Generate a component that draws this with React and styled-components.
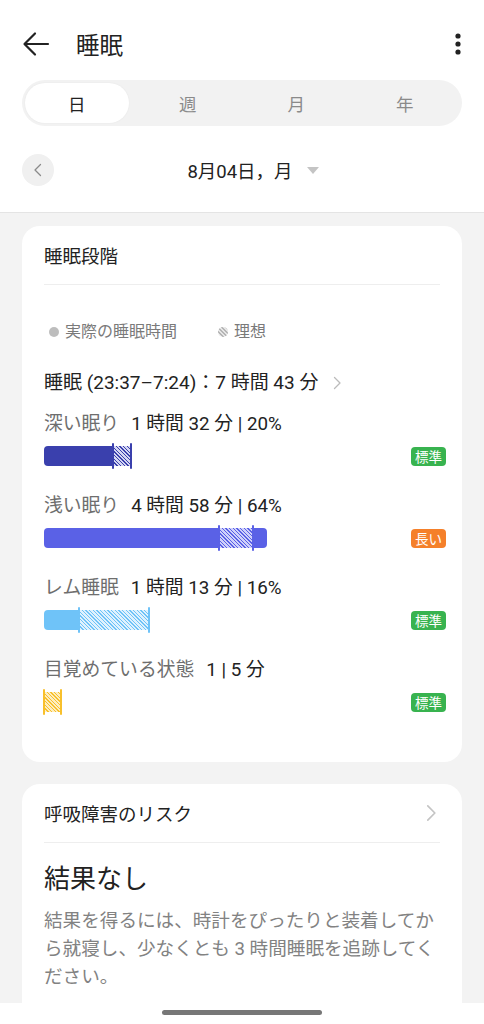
import React from "react";
import styled, { createGlobalStyle } from "styled-components";

const GlobalStyle = createGlobalStyle`
  html, body { margin: 0; padding: 0; }
  body {
    font-family: Roboto, "Noto Sans CJK JP", sans-serif;
    background: #f3f3f3;
    color: #222;
  }
`;

const Screen = styled.div`
  width: 484px;
  height: 1024px;
  display: flex;
  flex-direction: column;
  overflow: hidden;
  background: #f3f3f3;
`;

const Top = styled.div`
  background: #fff;
  border-bottom: 1px solid #e4e4e4;
  padding: 20px 22px 26px;
`;

const AppBar = styled.div`
  height: 48px;
  display: flex;
  align-items: center;
`;

const Title = styled.h1`
  margin: 0 0 0 26px;
  flex: 1;
  font-size: 23.5px;
  font-weight: 400;
  color: #222;
`;

const IconButton = styled.button`
  border: 0;
  background: none;
  padding: 0;
  display: flex;
  align-items: center;
  justify-content: center;
`;

const Tabs = styled.div`
  margin-top: 12px;
  height: 46px;
  box-sizing: border-box;
  padding: 3px;
  border-radius: 23px;
  background: #f2f2f2;
  display: grid;
  grid-template-columns: repeat(4, 1fr);
`;

const Tab = styled.div`
  display: flex;
  align-items: center;
  justify-content: center;
  border-radius: 20px;
  font-size: 17.5px;
  margin-right: ${({ active }) => (active ? "5px" : "0")};
  background: ${({ active }) => (active ? "#fff" : "transparent")};
  color: ${({ active }) => (active ? "#222" : "#8a8a8a")};
  box-shadow: ${({ active }) => (active ? "0 0 2px rgba(0,0,0,0.06)" : "none")};
`;

const DateRow = styled.div`
  margin-top: 28px;
  height: 32px;
  display: grid;
  grid-template-columns: 32px 1fr 32px;
  align-items: center;
`;

const RoundButton = styled.div`
  width: 32px;
  height: 32px;
  border-radius: 50%;
  background: #f0f0f0;
  display: flex;
  align-items: center;
  justify-content: center;
`;

const DateLabel = styled.div`
  display: flex;
  align-items: center;
  justify-content: center;
  gap: 14px;
  font-size: 18.5px;
  color: #222;
  margin-left: 22px;
`;

const Caret = styled.span`
  width: 0;
  height: 0;
  border-left: 6px solid transparent;
  border-right: 6px solid transparent;
  border-top: 7px solid #c4c4c4;
  margin-top: 1px;
`;

const Body = styled.div`
  flex: 1;
  overflow: hidden;
  padding: 13px 22px 0;
  display: flex;
  flex-direction: column;
  gap: 22px;
`;

const Card = styled.section`
  background: #fff;
  border-radius: 18px;
  padding: 0 22px ${({ bottom }) => bottom || 0}px;
`;

const CardHeader = styled.div`
  height: 58px;
  display: flex;
  align-items: center;
  justify-content: space-between;
  border-bottom: 1px solid #eeeeee;
  font-size: 18.5px;
  color: #222;
`;

const Legend = styled.div`
  margin-top: 36px;
  line-height: 22px;
  display: flex;
  align-items: center;
  font-size: 16px;
  color: #7a7a7a;
`;

const LegendItem = styled.span`
  display: flex;
  align-items: center;
  gap: 6px;
  margin-left: ${({ shift }) => shift || 0}px;
`;

const Dot = styled.span`
  width: 10px;
  height: 10px;
  border-radius: 50%;
  background: ${({ hatched }) =>
    hatched
      ? "repeating-linear-gradient(45deg, #b5b5b5 0 1.5px, #e6e6e6 1.5px 3px)"
      : "#bdbdbd"};
`;

const Total = styled.div`
  margin-top: 28px;
  line-height: 24px;
  display: flex;
  align-items: center;
  gap: 12px;
  font-size: 19px;
  color: #222;
`;

const Stages = styled.div`
  margin-top: 17px;
  display: flex;
  flex-direction: column;
  gap: 24px;
`;

const StageLabel = styled.div`
  line-height: 24px;
  font-size: 18.8px;
  color: #222;
  span {
    color: #6e6e6e;
    margin-right: 12px;
  }
`;

const BarRow = styled.div`
  margin-top: 6px;
  height: 28px;
  display: flex;
  align-items: center;
  justify-content: space-between;
  margin-right: -6px;
`;

const Track = styled.div`
  display: flex;
  height: 20px;
`;

const Solid = styled.div`
  height: 100%;
  background: ${({ color }) => color};
  border-radius: ${({ first, last }) =>
    `${first ? 4 : 0}px ${last ? 4 : 0}px ${last ? 4 : 0}px ${first ? 4 : 0}px`};
`;

const Hatch = styled.div`
  position: relative;
  height: 100%;
  background: repeating-linear-gradient(
    45deg,
    ${({ color }) => color} 0 1px,
    ${({ light }) => light} 1px 2.6px
  );
  &::before,
  &::after {
    content: "";
    position: absolute;
    top: -3px;
    bottom: -3px;
    width: 2px;
    border-radius: 1px;
    background: ${({ color }) => color};
  }
  &::before { left: -1px; }
  &::after { right: -1px; }
`;

const Badge = styled.span`
  height: 19px;
  padding: 0 4px;
  border-radius: 4px;
  display: flex;
  align-items: center;
  font-size: 13.5px;
  color: #fff;
  background: ${({ tone }) => (tone === "long" ? "#f5802a" : "#38b34f")};
`;

const RiskTitle = styled.div`
  margin-top: 18px;
  font-size: 26px;
  line-height: 36px;
  color: #222;
`;

const RiskText = styled.p`
  margin: 10px 0 0;
  font-size: 18.6px;
  line-height: 28px;
  color: #828282;
`;

const NavBar = styled.div`
  height: 21px;
  background: #fff;
  display: flex;
  justify-content: center;
  padding-top: 7px;
  box-sizing: border-box;
`;

const Handle = styled.div`
  width: 160px;
  height: 5px;
  border-radius: 3px;
  background: #777;
`;

const Chevron = ({ dir = "right", color = "#bbb", size = 14 }) => (
  <svg width={size} height={size} viewBox="0 0 14 14" fill="none">
    <path
      d={dir === "right" ? "M4.5 1.5 L10 7 L4.5 12.5" : "M9.5 1.5 L4 7 L9.5 12.5"}
      stroke={color}
      strokeWidth="1.3"
      strokeLinecap="round"
      strokeLinejoin="round"
    />
  </svg>
);

const stages = [
  {
    name: "深い眠り",
    value: "1 時間 32 分 | 20%",
    color: "#3a40ad",
    light: "#d4d6f2",
    parts: [
      { type: "solid", w: 69 },
      { type: "hatch", w: 18 },
    ],
    badge: "標準",
  },
  {
    name: "浅い眠り",
    value: "4 時間 58 分 | 64%",
    color: "#5a61e6",
    light: "#cfd1fa",
    parts: [
      { type: "solid", w: 175 },
      { type: "hatch", w: 34 },
      { type: "solid", w: 14 },
    ],
    badge: "長い",
    tone: "long",
  },
  {
    name: "レム睡眠",
    value: "1 時間 13 分 | 16%",
    color: "#6fc3f8",
    light: "#dff2fe",
    parts: [
      { type: "solid", w: 35 },
      { type: "hatch", w: 70 },
    ],
    badge: "標準",
  },
  {
    name: "目覚めている状態",
    value: "1 | 5 分",
    color: "#f8c02c",
    light: "#fdedbf",
    parts: [{ type: "hatch", w: 17 }],
    badge: "標準",
  },
];

function Stage({ stage }) {
  const n = stage.parts.length;
  return (
    <div>
      <StageLabel>
        <span>{stage.name}</span>
        {stage.value}
      </StageLabel>
      <BarRow>
        <Track>
          {stage.parts.map((p, i) =>
            p.type === "solid" ? (
              <Solid
                key={i}
                color={stage.color}
                first={i === 0}
                last={i === n - 1}
                style={{ width: p.w }}
              />
            ) : (
              <Hatch key={i} color={stage.color} light={stage.light} style={{ width: p.w }} />
            )
          )}
        </Track>
        <Badge tone={stage.tone}>{stage.badge}</Badge>
      </BarRow>
    </div>
  );
}

export default function App() {
  return (
    <>
      <GlobalStyle />
      <Screen>
        <Top>
          <AppBar>
            <IconButton aria-label="back">
              <svg width="28" height="28" viewBox="0 0 28 28" fill="none">
                <path
                  d="M26 14 H3 M13 3.5 L2.5 14 L13 24.5"
                  stroke="#222"
                  strokeWidth="2.2"
                  strokeLinecap="round"
                  strokeLinejoin="round"
                />
              </svg>
            </IconButton>
            <Title>睡眠</Title>
            <IconButton aria-label="menu">
              <svg width="8" height="24" viewBox="0 0 8 24">
                <circle cx="4" cy="4" r="2.6" fill="#222" />
                <circle cx="4" cy="12" r="2.6" fill="#222" />
                <circle cx="4" cy="20" r="2.6" fill="#222" />
              </svg>
            </IconButton>
          </AppBar>
          <Tabs>
            <Tab active>日</Tab>
            <Tab>週</Tab>
            <Tab>月</Tab>
            <Tab>年</Tab>
          </Tabs>
          <DateRow>
            <RoundButton>
              <Chevron dir="left" color="#8a8a8a" size={14} />
            </RoundButton>
            <DateLabel>
              8月04日，月
              <Caret />
            </DateLabel>
          </DateRow>
        </Top>
        <Body>
          <Card bottom={46}>
            <CardHeader>睡眠段階</CardHeader>
            <Legend>
              <LegendItem shift={5}>
                <Dot />
                実際の睡眠時間
              </LegendItem>
              <LegendItem shift={41}>
                <Dot hatched />
                理想
              </LegendItem>
            </Legend>
            <Total>
              睡眠 (23:37–7:24)：7 時間 43 分
              <Chevron />
            </Total>
            <Stages>
              {stages.map((s) => (
                <Stage key={s.name} stage={s} />
              ))}
            </Stages>
          </Card>
          <Card bottom={30}>
            <CardHeader>
              呼吸障害のリスク
              <Chevron size={18} color="#c4c4c4" />
            </CardHeader>
            <RiskTitle>結果なし</RiskTitle>
            <RiskText>
              結果を得るには、時計をぴったりと装着してから就寝し、少なくとも 3 時間睡眠を追跡してください。
            </RiskText>
          </Card>
        </Body>
        <NavBar>
          <Handle />
        </NavBar>
      </Screen>
    </>
  );
}
